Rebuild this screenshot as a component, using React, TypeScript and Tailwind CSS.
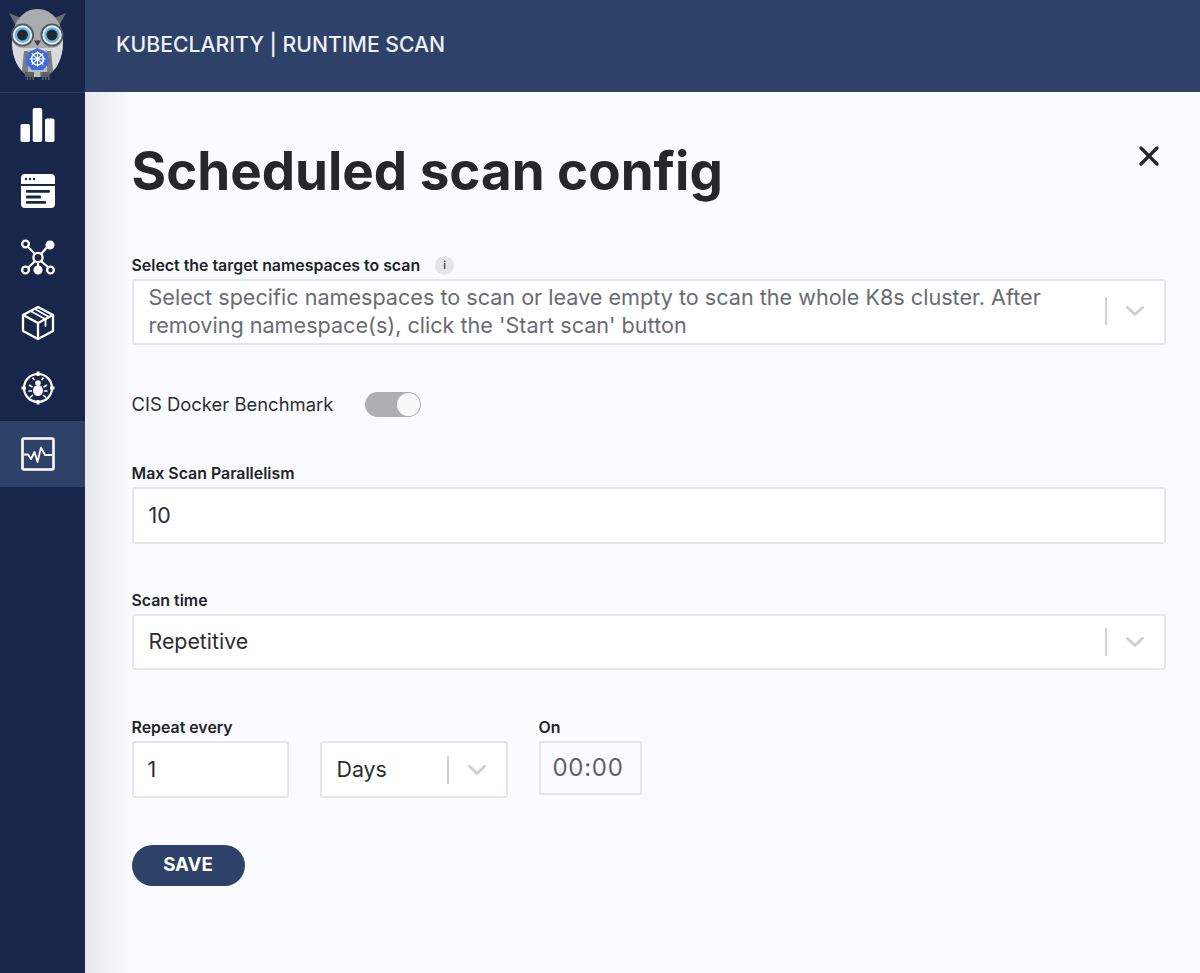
import React from "react";

const Chevron = () => (
  <svg width="20" height="12" viewBox="0 0 20 12" fill="none" stroke="#cfd0d2" strokeWidth="3" strokeLinecap="round" strokeLinejoin="round">
    <path d="M2.5 2.5 L10 9.5 L17.5 2.5" />
  </svg>
);

const Indicator = () => (
  <div className="flex items-center h-full shrink-0">
    <div className="w-[1.5px] h-[28px] bg-[#cfd0d2]" />
    <div className="w-[57px] flex justify-center"><Chevron /></div>
  </div>
);

const Owl = () => (
  <svg width="84" height="92" viewBox="0 0 84 92">
    <path d="M9 13 L21 18 L16 26 Z" fill="#6b6d70" />
    <path d="M66 13 L54 18 L59 26 Z" fill="#6b6d70" />
    <path d="M37.5 9 C52 9 63 22 63 42 C63 60 55 77 37.5 77 C20 77 12 60 12 42 C12 22 23 9 37.5 9 Z" fill="#a9abae" />
    <path d="M12 40 C12 60 20 77 37.5 77 C55 77 63 60 63 40 C58 51 50 48 37.5 48 C25 48 17 51 12 40 Z" fill="#d9dadc" />
    <path d="M24 51 L22 71 C24 74 27 76 30 76.5 L30 51 Z" fill="#7a7c7f" />
    <path d="M51 51 L53 71 C51 74 48 76 45 76.5 L45 51 Z" fill="#7a7c7f" />
    <path d="M28 50 H47 V77 H28 Z" fill="#b9bbbe" />
    <circle cx="22.5" cy="35" r="10.6" fill="#eceded" stroke="#55575a" strokeWidth="1.8" />
    <circle cx="52" cy="35" r="10.6" fill="#eceded" stroke="#55575a" strokeWidth="1.8" />
    <circle cx="22.5" cy="35" r="7.8" fill="#5cb8ee" />
    <circle cx="52" cy="35" r="7.8" fill="#5cb8ee" />
    <circle cx="22.5" cy="35" r="5.4" fill="#262626" />
    <circle cx="52" cy="35" r="5.4" fill="#262626" />
    <path d="M34 40.5 H41 L37.5 46 Z" fill="#3c3d40" />
    <path d="M37.5 48 L47 52.5 L49.5 62.5 L43 70 H32 L25.5 62.5 L28 52.5 Z" fill="#3f6ae0" />
    <g stroke="#fff" fill="none">
      <circle cx="37.5" cy="59" r="6" strokeWidth="1.6" />
      <circle cx="37.5" cy="59" r="1.6" fill="#fff" strokeWidth="0.5" />
      <path d="M37.5 51 V67 M29.5 59 H45.5 M31.8 53.3 L43.2 64.7 M43.2 53.3 L31.8 64.7" strokeWidth="1.1" />
    </g>
    <path d="M25 72 h9 v8 h-1.5 v-3 h-1.5 v3 h-1.5 v-3 h-1.5 v3 h-1.5 v-3 h-1.5 v3 Z M40.5 72 h9 v8 h-1.5 v-3 h-1.5 v3 h-1.5 v-3 h-1.5 v3 h-1.5 v-3 h-1.5 v3 Z" fill="#5f6063" />
  </svg>
);

const BarsIcon = () => (
  <svg width="36" height="36" viewBox="0 0 36 36" fill="#fff">
    <rect x="0.5" y="16" width="9.5" height="18" rx="1.8" />
    <rect x="12.7" y="0" width="9.5" height="34" rx="1.8" />
    <rect x="25" y="10.5" width="9.5" height="23.5" rx="1.8" />
  </svg>
);

const WindowIcon = () => (
  <svg width="36" height="36" viewBox="0 0 36 36">
    <path d="M1 11 V5 a4 4 0 0 1 4 -4 H31 a4 4 0 0 1 4 4 V11 Z M1 13 H35 V31 a4 4 0 0 1 -4 4 H5 a4 4 0 0 1 -4 -4 Z" fill="#fff" />
    <g fill="#17264a">
      <circle cx="6" cy="6" r="1.2" /><circle cx="10" cy="6" r="1.2" /><circle cx="14" cy="6" r="1.2" />
      <rect x="6" y="17" width="24" height="2.8" rx="1" />
      <rect x="6" y="22.6" width="15" height="2.8" rx="1" />
      <rect x="6" y="28" width="20" height="2.8" rx="1" />
    </g>
  </svg>
);

const GraphIcon = () => (
  <svg width="36" height="36" viewBox="0 0 36 36" fill="none" stroke="#fff" strokeWidth="2.3">
    <path d="M7 7 L15 15 M29 6 L21 15 M15 22 L8 29 M18 23 V29 M21 22 L29 29" />
    <circle cx="18" cy="18.5" r="4.6" />
    <circle cx="5.5" cy="5" r="3.4" />
    <circle cx="30" cy="6" r="3.4" fill="#fff" />
    <circle cx="5.5" cy="31" r="3.4" />
    <circle cx="18" cy="31" r="3.4" fill="#fff" />
    <circle cx="30.5" cy="31" r="3.4" />
  </svg>
);

const BoxIcon = () => (
  <svg width="34" height="36" viewBox="0 0 34 36" fill="none" stroke="#fff" strokeWidth="2.3" strokeLinejoin="round" strokeLinecap="round">
    <path d="M17 2 L32 10 V26 L17 34 L2 26 V10 Z" />
    <path d="M2 10 L17 18 L32 10 M17 18 V34" />
    <path d="M9.5 6 L24.5 14.2 V21 M14 4 L28 12" strokeWidth="1.8" />
  </svg>
);

const BugIcon = () => (
  <svg width="34" height="34" viewBox="0 0 34 34" fill="none" stroke="#fff" strokeWidth="2.2">
    <circle cx="17" cy="17" r="14" />
    <path d="M17 0.5 V5 M17 29 V33.5 M0.5 17 H5 M29 17 H33.5" strokeWidth="3" />
    <ellipse cx="17" cy="19.5" rx="5" ry="5.5" fill="#fff" stroke="none" />
    <circle cx="17" cy="12" r="2.8" fill="#fff" stroke="none" />
    <path d="M13.5 9 L11.5 6.5 M20.5 9 L22.5 6.5 M11.5 16 L8 14 M22.5 16 L26 14 M11 20 H7.5 M23 20 H26.5 M12 24 L9 26.5 M22 24 L25 26.5" strokeWidth="1.5" />
  </svg>
);

const PulseIcon = () => (
  <svg width="34" height="34" viewBox="0 0 34 34" fill="none" stroke="#fff" strokeLinejoin="round">
    <rect x="1.5" y="1.5" width="31" height="31" rx="1.5" strokeWidth="2.6" />
    <path d="M3 17.5 H7 L10 22 L13.5 15 L16.5 25 L20 10.5 L24 18 H31" strokeWidth="1.8" />
  </svg>
);

const icons = [BarsIcon, WindowIcon, GraphIcon, BoxIcon, BugIcon, PulseIcon];

function Label({ children, className = "mb-[5px]" }: { children: React.ReactNode; className?: string }) {
  return <div className={`text-[15.9px] leading-[17px] font-semibold text-[#222427] ${className}`}>{children}</div>;
}

export default function App() {
  return (
    <div className="flex h-[973px] w-[1200px] overflow-hidden bg-[#fafbfe] text-[#2c2d30] font-['Inter',sans-serif]">
      <aside className="w-[84.5px] shrink-0 flex flex-col bg-[#17264a]">
        <div className="h-[93px] shrink-0 border-b border-[#2a3b63]">
          <Owl />
        </div>
        {icons.map((Icon, i) => (
          <div key={i} className={`h-[65.6px] shrink-0 flex items-center justify-center pr-[8px] ${i === 5 ? "bg-[#2e4169]" : ""}`}>
            <Icon />
          </div>
        ))}
      </aside>
      <div className="flex-1 flex flex-col min-w-0">
        <header className="h-[92px] shrink-0 bg-[#2e4169] flex items-center pb-[3px] pl-[31.5px] text-[21.2px] font-medium text-[#eef0f4]">
          KUBECLARITY | RUNTIME SCAN
        </header>
        <main className="flex-1 relative pl-[47px] pr-[34.5px] pt-[44px] bg-gradient-to-r from-[#e6e8ed] via-[#fafbfe] via-[4%] to-[#fafbfe]">
          <div className="flex justify-between items-start">
            <h1 className="text-[52.9px] leading-[70px] font-bold text-[#25272a]">Scheduled scan config</h1>
            <svg className="mt-[10px] mr-[7px]" width="20" height="20" viewBox="0 0 20 20" fill="none" stroke="#25272a" strokeWidth="3.2" strokeLinecap="round">
              <path d="M2 2 L18 18 M18 2 L2 18" />
            </svg>
          </div>

          <div className="mt-[50px] flex items-center gap-[15px] mb-[4px]">
            <Label className="">Select the target namespaces to scan</Label>
            <div className="w-[19px] h-[19px] rounded-full bg-[#e4e5e8] text-[#3a3c40] text-[11px] font-medium flex items-center justify-center">i</div>
          </div>
          <div className="h-[66px] flex items-center bg-white border-2 border-[#e5e6e9] rounded-[3px] pl-[15px] pb-[2px]">
            <div className="flex-1 text-[21.6px] leading-[28px] text-[#686c72]">
              Select specific namespaces to scan or leave empty to scan the whole K8s cluster. After removing namespace(s), click the 'Start scan' button
            </div>
            <Indicator />
          </div>

          <div className="mt-[46px] flex items-center h-[27px]">
            <span className="text-[18.46px] text-[#2c2d30] w-[233px]">CIS Docker Benchmark</span>
            <div className="w-[56px] h-[25px] rounded-full bg-[#acb0b5] relative">
              <div className="absolute right-[1px] top-[1px] w-[23px] h-[23px] rounded-full bg-[#f8f8f8]" />
            </div>
          </div>

          <div className="mt-[47px]">
            <Label>Max Scan Parallelism</Label>
            <div className="h-[57px] flex items-center bg-white border-2 border-[#e5e6e9] rounded-[3px] pl-[15px] text-[21.33px]">10</div>
          </div>

          <div className="mt-[48px]">
            <Label>Scan time</Label>
            <div className="h-[56px] flex items-center bg-white border-2 border-[#e5e6e9] rounded-[3px] pl-[15px]">
              <div className="flex-1 text-[21.33px]">Repetitive</div>
              <Indicator />
            </div>
          </div>

          <div className="mt-[49px] flex items-start">
            <div className="w-[157px] mr-[31px]">
              <Label>Repeat every</Label>
              <div className="h-[57px] flex items-center bg-white border-2 border-[#e5e6e9] rounded-[3px] pl-[14px] text-[21.33px]">1</div>
            </div>
            <div className="w-[188px] mr-[31px] pt-[22px]">
              <div className="h-[57px] flex items-center bg-white border-2 border-[#e5e6e9] rounded-[3px] pl-[15px]">
                <div className="flex-1 text-[21.33px]">Days</div>
                <Indicator />
              </div>
            </div>
            <div>
              <Label>On</Label>
              <div className="w-[103px] h-[54px] flex items-center pl-[12px] bg-[#fafbfe] border-2 border-[#e5e6e9] text-[24px] tracking-[0.7px] text-[#5d6269]">00:00</div>
            </div>
          </div>

          <button className="mt-[47px] block w-[113px] h-[41px] rounded-full bg-[#2e4169] text-white text-[18.7px] font-bold">SAVE</button>
        </main>
      </div>
    </div>
  );
}
